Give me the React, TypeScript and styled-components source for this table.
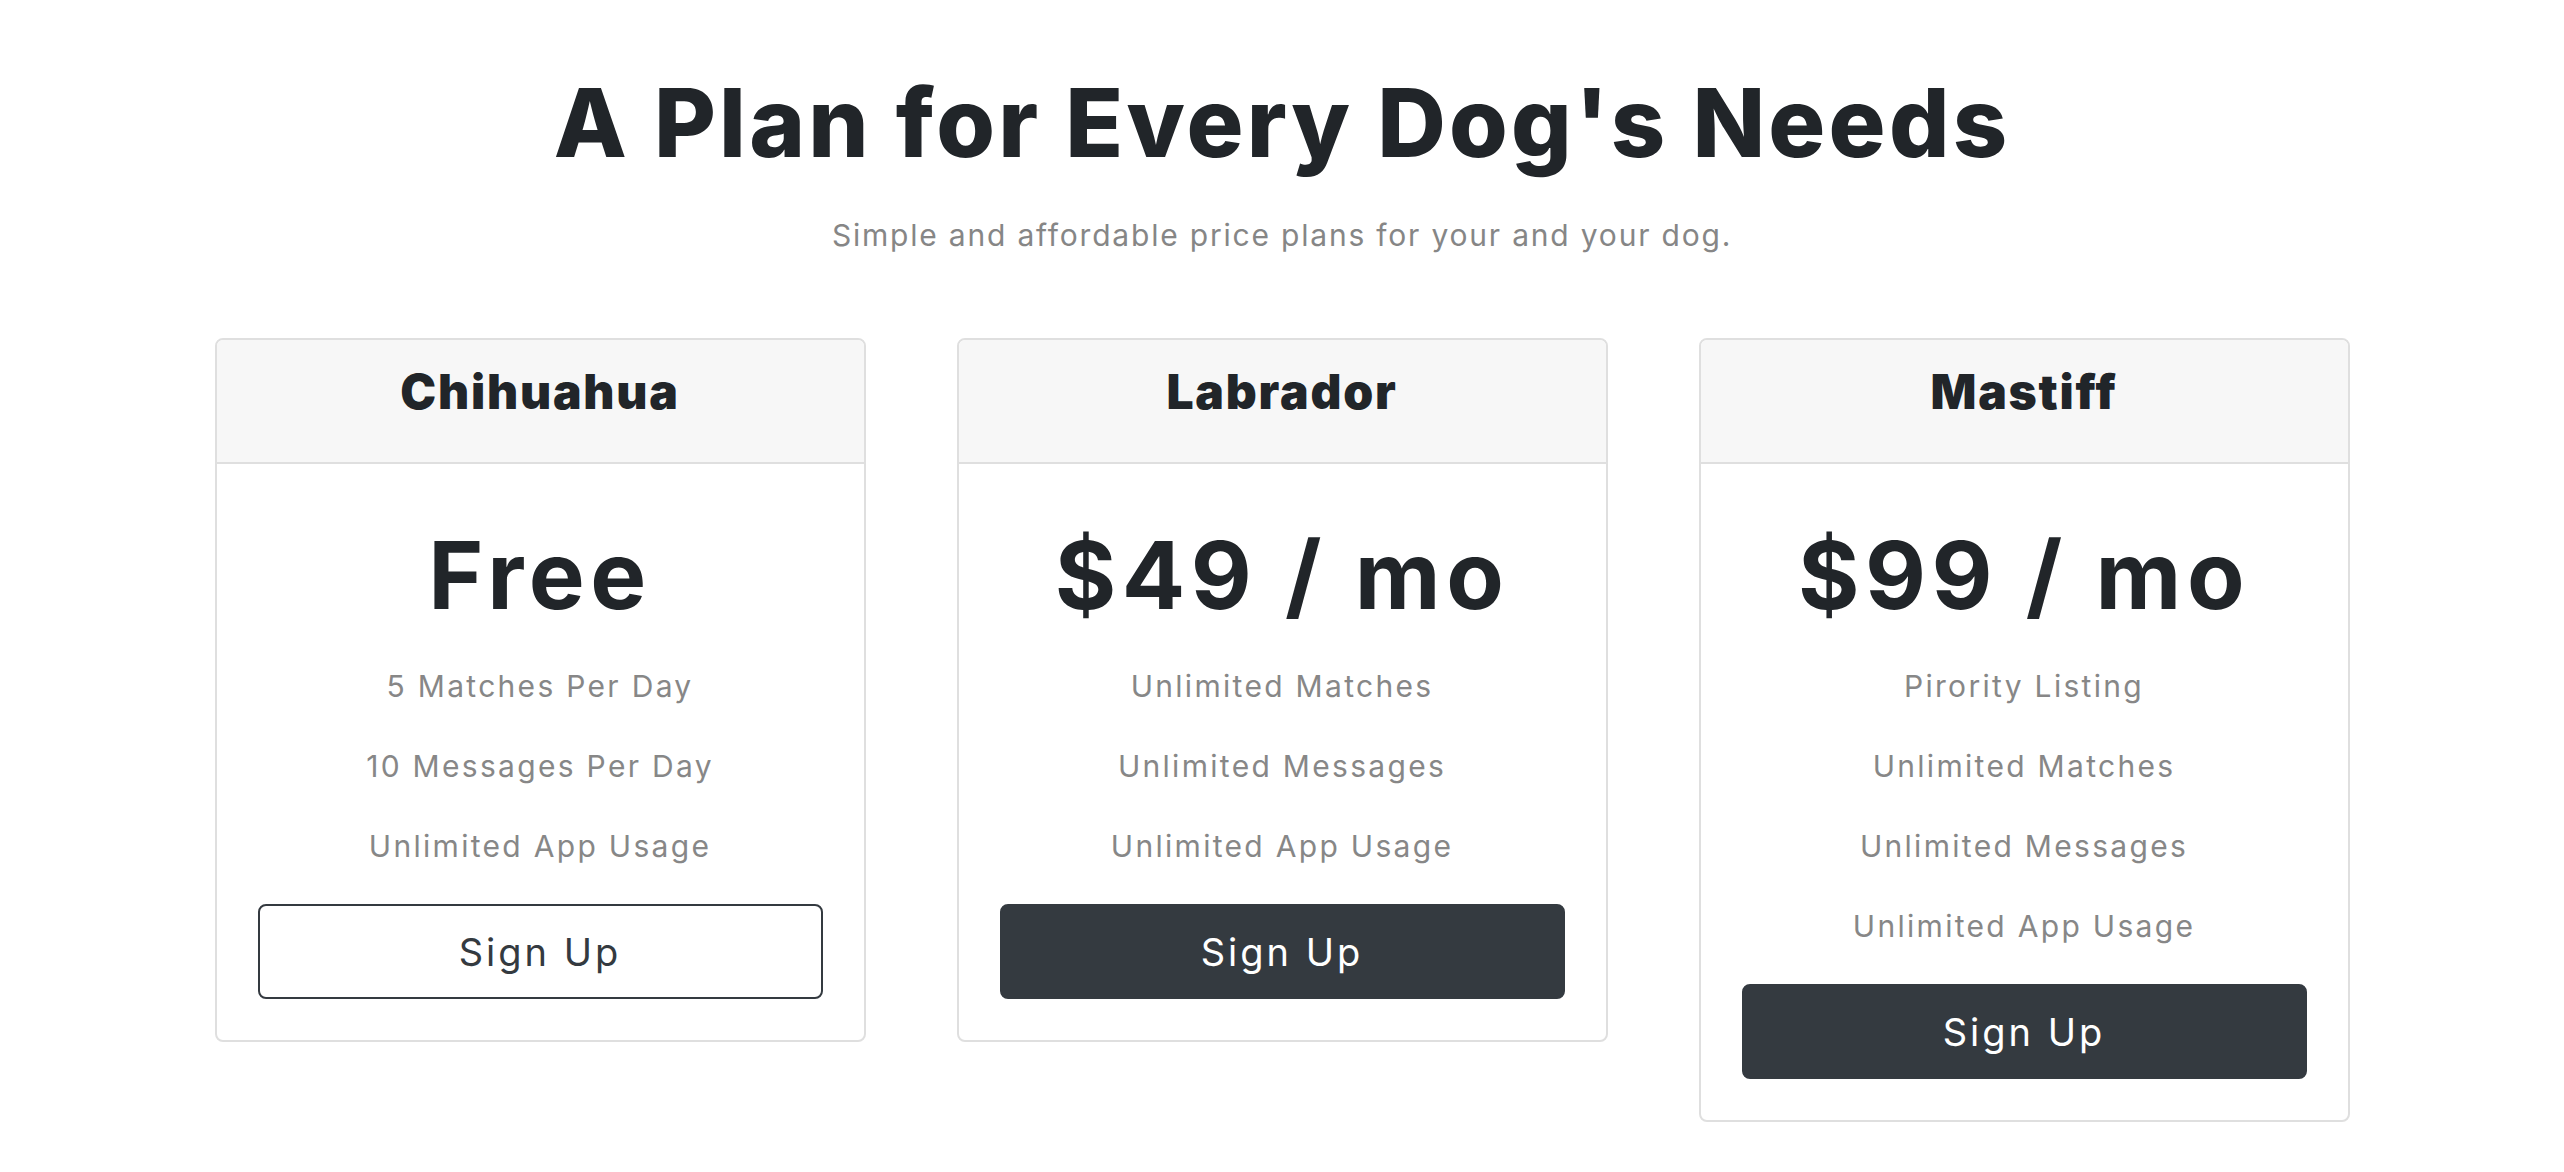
import styled, { createGlobalStyle } from 'styled-components';

const GlobalStyle = createGlobalStyle`
    html, body {
        margin: 0;
        padding: 0;
        background: #ffffff;
    }

    body {
        font-family: Inter, "Liberation Sans", sans-serif;
        color: #212529;
    }

    * {
        box-sizing: border-box;
    }
`;

const Section = styled.section`
    display: flex;
    flex-direction: column;
    align-items: center;
    padding: 66px 0 60px 0;
`;

const Title = styled.h1`
    margin: 0;
    font-size: 95px;
    line-height: 1.2;
    font-weight: 800;
    letter-spacing: 3.2px;
    color: #212529;
    text-align: center;
`;

const Subtitle = styled.p`
    margin: 33px 0 0 0;
    font-size: 30px;
    line-height: 1.5;
    font-weight: 400;
    letter-spacing: 1.8px;
    color: #868686;
    text-align: center;
`;

const CardsRow = styled.div`
    display: flex;
    align-items: flex-start;
    justify-content: center;
    gap: 91px;
    margin-top: 80px;
`;

const Card = styled.div`
    width: 651px;
    border: 2px solid #dfdfdf;
    border-radius: 8px;
    background-color: #ffffff;
    overflow: hidden;
`;

const CardHeader = styled.div`
    background-color: #f7f7f7;
    border-bottom: 2px solid #dfdfdf;
    padding: 23px 0 41px 0;
    text-align: center;

    h4 {
        margin: 0;
        font-size: 48px;
        line-height: 1.2;
        font-weight: 900;
        letter-spacing: 1.8px;
        color: #212529;
    }
`;

const CardBody = styled.div`
    padding: 55px 41px 41px 41px;
    text-align: center;
`;

const Price = styled.h2`
    margin: 0;
    font-size: 94px;
    line-height: 1.2;
    font-weight: 700;
    letter-spacing: 5.5px;
    color: #212529;
`;

const Features = styled.ul`
    list-style: none;
    padding: 0;
    margin: 15px 0 18px 0;

    li {
        height: 80px;
        line-height: 80px;
        font-size: 30px;
        letter-spacing: 2.3px;
        color: #878787;
    }
`;

const SignUpButton = styled.button<{ $filled?: boolean }>`
    display: block;
    width: 100%;
    height: 95px;
    border-radius: 8px;
    border: 2px solid #343a40;
    background-color: ${(p) => (p.$filled ? '#343a40' : '#ffffff')};
    color: ${(p) => (p.$filled ? '#ffffff' : '#343a40')};
    font-family: inherit;
    font-size: 38px;
    font-weight: 400;
    letter-spacing: 3px;
    cursor: pointer;
`;

type Plan = {
    name: string;
    price: string;
    features: string[];
    filled: boolean;
};

const plans: Plan[] = [
    {
        name: 'Chihuahua',
        price: 'Free',
        features: ['5 Matches Per Day', '10 Messages Per Day', 'Unlimited App Usage'],
        filled: false,
    },
    {
        name: 'Labrador',
        price: '$49 / mo',
        features: ['Unlimited Matches', 'Unlimited Messages', 'Unlimited App Usage'],
        filled: true,
    },
    {
        name: 'Mastiff',
        price: '$99 / mo',
        features: ['Pirority Listing', 'Unlimited Matches', 'Unlimited Messages', 'Unlimited App Usage'],
        filled: true,
    },
];

function App() {
    return (
        <>
            <GlobalStyle />
            <Section>
                <Title>A Plan for Every Dog's Needs</Title>
                <Subtitle>Simple and affordable price plans for your and your dog.</Subtitle>

                <CardsRow>
                    {plans.map((plan) => (
                        <Card key={plan.name}>
                            <CardHeader>
                                <h4>{plan.name}</h4>
                            </CardHeader>
                            <CardBody>
                                <Price>{plan.price}</Price>
                                <Features>
                                    {plan.features.map((f) => (
                                        <li key={f}>{f}</li>
                                    ))}
                                </Features>
                                <SignUpButton $filled={plan.filled}>Sign Up</SignUpButton>
                            </CardBody>
                        </Card>
                    ))}
                </CardsRow>
            </Section>
        </>
    );
}

export default App;
